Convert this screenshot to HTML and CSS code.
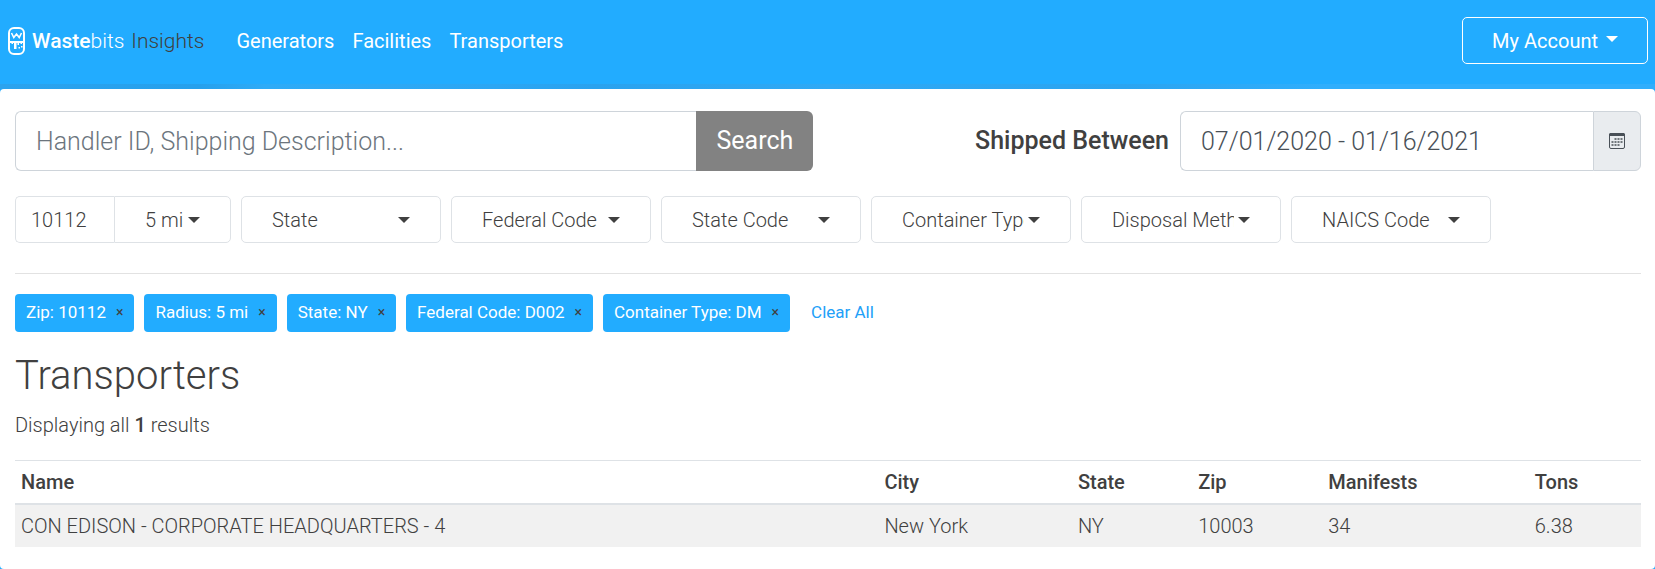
FILE: index.html
```html
<!DOCTYPE html>
<html lang="en">
<head>
<meta charset="utf-8">
<meta name="viewport" content="width=device-width, initial-scale=1">
<title>Wastebits Insights - Transporters</title>
<link rel="stylesheet" href="styles.css">
</head>
<body class="page">
<header class="topbar">
  <a class="brand" href="#">
    <svg class="brand-mark" viewBox="0 0 17 28" width="17" height="28" aria-hidden="true">
      <rect x="1" y="1" width="15" height="26" rx="5" fill="none" stroke="#fff" stroke-width="2"/>
      <path d="M3.500 6l2.300 4.500 2.700-3.500 2.700 3.500 2.300-4.500" fill="none" stroke="#fff" stroke-width="1.600"/>
      <path d="M1.500 14h14v2h-1.500v1h-1.500v-1h-1.500v2h-1.500v-2h-1v6h-2.500v-6h-1v1h-1.500v-1h-2z" fill="#fff"/>
      <path d="M10.500 20h1.500v1.500h-1.500zM13 19h1.500v1.500h-1.500z" fill="#fff"/>
    </svg>
    <span class="brand-name"><b class="brand-strong">Waste</b>bits</span>
    <span class="brand-product">Insights</span>
  </a>
  <nav class="nav">
    <a class="nav-link" href="#">Generators</a>
    <a class="nav-link" href="#">Facilities</a>
    <a class="nav-link" href="#">Transporters</a>
  </nav>
  <button class="account" type="button">My Account
    <svg class="account-caret" viewBox="0 0 12 6" width="12" height="6" aria-hidden="true"><path d="M0 0h12l-6 6z" fill="currentColor"/></svg>
  </button>
</header>
<div class="banner"></div>
<main class="card">
  <form class="search-row">
    <div class="search-group">
      <input class="field search-input" type="text" aria-label="Search" placeholder="Handler ID, Shipping Description...">
      <button class="search-button" type="button">Search</button>
    </div>
    <div class="date-group">
      <label class="date-label" for="shipped">Shipped Between</label>
      <input class="field date-input" id="shipped" type="text" value="07/01/2020 - 01/16/2021">
      <button class="date-button" type="button" aria-label="Open calendar">
        <svg viewBox="0 0 16 16" width="16" height="16" aria-hidden="true">
          <rect x="0.500" y="0.500" width="15" height="15" rx="1.500" fill="none" stroke="#495057"/>
          <path d="M0 1.500a1.500 1.500 0 0 1 1.500-1.500h13a1.500 1.500 0 0 1 1.500 1.500v1.500h-16z" fill="#495057"/>
          <path d="M5.500 6h8M2.500 9h11M2.500 12h8" stroke="#495057" stroke-width="1.700" stroke-dasharray="2 1"/>
        </svg>
      </button>
    </div>
  </form>
  <form class="filters">
    <div class="zip-group">
      <input class="filter zip-input" type="text" aria-label="Zip" value="10112">
      <select class="filter radius-select" aria-label="Radius"><option>5 mi</option></select>
    </div>
    <select class="filter filter-select" aria-label="State"><option>State</option></select>
    <select class="filter filter-select" aria-label="Federal Code"><option>Federal Code</option></select>
    <select class="filter filter-select" aria-label="State Code"><option>State Code</option></select>
    <select class="filter filter-select" aria-label="Container Type"><option>Container Type</option></select>
    <select class="filter filter-select" aria-label="Disposal Method"><option>Disposal Method</option></select>
    <select class="filter filter-select" aria-label="NAICS Code"><option>NAICS Code</option></select>
  </form>
  <hr class="divider">
  <div class="chips">
    <button class="chip" type="button">Zip: 10112 <span class="chip-x">×</span></button>
    <button class="chip" type="button">Radius: 5 mi <span class="chip-x">×</span></button>
    <button class="chip" type="button">State: NY <span class="chip-x">×</span></button>
    <button class="chip" type="button">Federal Code: D002 <span class="chip-x">×</span></button>
    <button class="chip" type="button">Container Type: DM <span class="chip-x">×</span></button>
    <a class="clear" href="#">Clear All</a>
  </div>
  <h1 class="title">Transporters</h1>
  <p class="summary">Displaying all <b class="count">1</b> results</p>
  <table class="results">
    <colgroup><col class="col-name"><col class="col-city"><col class="col-state"><col class="col-zip"><col class="col-manifests"><col></colgroup>
    <thead><tr><th>Name</th><th>City</th><th>State</th><th>Zip</th><th>Manifests</th><th>Tons</th></tr></thead>
    <tbody><tr><td>CON EDISON - CORPORATE HEADQUARTERS - 4</td><td>New York</td><td>NY</td><td>10003</td><td>34</td><td>6.38</td></tr></tbody>
  </table>
</main>
</body>
</html>
```
FILE: styles.css
```css
* { box-sizing: border-box; }

.page {
  display: flex;
  flex-direction: column;
  min-height: 100vh;
  margin: 0;
  background: #22acff;
  color: #404040;
  font: 300 20px/30px Roboto, "Open Sans", sans-serif;
}

button, input, select { margin: 0; font: inherit; color: inherit; }

.topbar {
  display: flex;
  align-items: center;
  min-height: 84px;
  padding: 0 7px 3px 8px;
  color: #fff;
}

.brand {
  display: flex;
  align-items: center;
  gap: 7px;
  color: #fff;
  text-decoration: none;
  font-size: 21px;
}

.brand-strong { font-weight: 500; }
.brand-product { color: #404040; }

.nav { display: flex; gap: 18px; margin-left: 32px; }
.nav-link { color: #fff; font-weight: 400; text-decoration: none; }

.account {
  display: flex;
  align-items: center;
  gap: 8px;
  height: 47px;
  margin-left: auto;
  padding: 0 29px;
  border: 1px solid #fff;
  border-radius: 5px;
  background: transparent;
  font-weight: 400;
}

.account-caret { margin-bottom: 4px; }

.banner {
  height: 5px;
  background: linear-gradient(90deg, #2ba3ee, #26a0ec 12%, #2eabf7 16%, #2ca6f3 30%, #2aa2ee 36%, #2fa9f5 50%, #2ba4f0 68%, #30aefc 80%, #30aefc);
}

.card {
  flex: 1;
  padding: 22px 14px 20px 15px;
  border-radius: 4px;
  background: #fff;
}

.search-row { display: flex; justify-content: space-between; height: 60px; font-size: 25px; }
.search-group { display: flex; width: 49.100%; }
.date-group { display: flex; align-items: center; }

.field {
  height: 60px;
  min-width: 0;
  padding: 0 20px;
  border: 1px solid #ced4da;
  border-right: 0;
  border-radius: 6px 0 0 6px;
  background: #fff;
  color: #495057;
}

.field::placeholder { color: #6c757d; opacity: 1; }
.search-input { flex: 1; }

.search-button {
  width: 117px;
  border: 0;
  border-radius: 0 6px 6px 0;
  background: #828282;
  color: #fff;
  font-weight: 400;
}

.date-label { margin-right: 11px; font-weight: 500; }
.date-input { width: 413px; }

.date-button {
  display: grid;
  place-items: center;
  width: 48px;
  height: 60px;
  padding: 0;
  border: 1px solid #ced4da;
  border-radius: 0 6px 6px 0;
  background: #e9ecef;
}

.filters { display: flex; flex-wrap: wrap; gap: 10px; margin-top: 25px; }
.zip-group { display: flex; }

.filter {
  height: 47px;
  border: 1px solid #dee2e6;
  border-radius: 5px;
  background: #fff;
}

.zip-input { width: 99px; padding: 0 15px; border-right: 0; border-radius: 5px 0 0 5px; }

.radius-select, .filter-select {
  appearance: none;
  padding: 0 46px 0 30px;
  background: url("data:image/svg+xml,%3Csvg xmlns='http://www.w3.org/2000/svg' width='12' height='6'%3E%3Cpath d='M0 0h12l-6 6z' fill='%23404040'/%3E%3C/svg%3E") no-repeat right 30px center;
}

.radius-select { width: 117px; padding-right: 30px; border-radius: 0 5px 5px 0; }
.filter-select { width: 200px; }

.divider { margin: 30px 0 20px; border: 0; border-top: 1px solid #e2e2e2; }

.chips { display: flex; flex-wrap: wrap; align-items: center; gap: 10px; font-size: 17px; }

.chip {
  display: flex;
  align-items: center;
  gap: 10px;
  height: 38px;
  padding: 0 11px 2px;
  border: 0;
  border-radius: 4px;
  background: #22acff;
  color: #fff;
  font-weight: 400;
}

.chip-x { color: #404040; font-size: 14px; }
.clear { margin-left: 11px; padding-bottom: 2px; color: #22a0f8; font-weight: 400; text-decoration: none; }

.title { margin: 20px 0 10px; font-size: 40px; line-height: 48px; font-weight: 300; }
.summary { margin: 0 0 20px; }
.count { font-weight: 500; }

.results { width: 100%; table-layout: fixed; border-collapse: collapse; border-top: 1px solid #dee2e6; text-align: left; }
.results th, .results td { padding: 6px; }
.results th { border-bottom: 2px solid #dee2e6; font-weight: 500; }
.results td { background: #f1f1f1; }
.col-name { width: 53.100%; }
.col-city { width: 11.900%; }
.col-state { width: 7.400%; }
.col-zip { width: 8%; }
.col-manifests { width: 12.700%; }
```
